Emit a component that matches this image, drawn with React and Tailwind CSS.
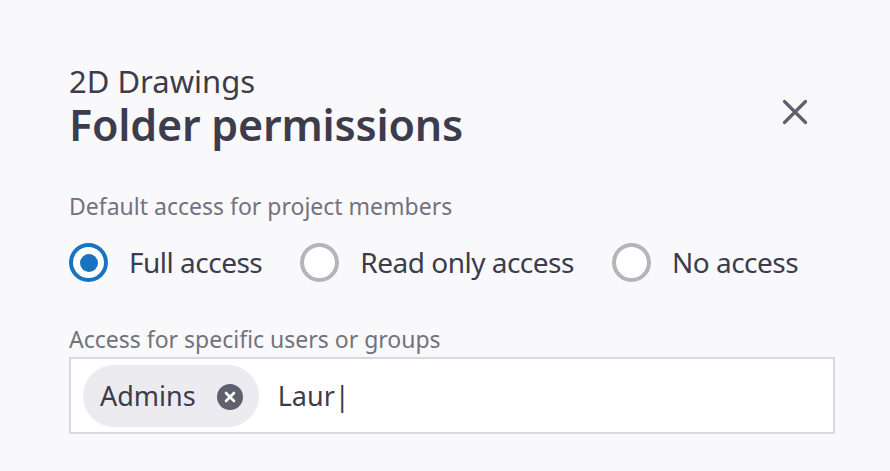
import React from "react";

function Radio({ checked, label }) {
  return (
    <label className="flex items-start gap-[21px]">
      {checked ? (
        <span className="w-[39px] h-[39px] rounded-full border-[4px] border-[#1a73c0] flex items-center justify-center bg-white">
          <span className="w-[18px] h-[18px] rounded-full bg-[#1a73c0]" />
        </span>
      ) : (
        <span className="w-[39px] h-[39px] rounded-full border-[4px] border-[#b4b4ba] bg-white" />
      )}
      <span className="text-[28px] leading-[38px] tracking-[-0.5px] text-[#3c3c4c]">{label}</span>
    </label>
  );
}

export default function App() {
  return (
    <div
      className="w-[890px] h-[471px] bg-[#f9f9fb] overflow-hidden"
      style={{ fontFamily: '"Noto Sans", "Open Sans", sans-serif' }}
    >
      <div className="pl-[69px] pr-[55px] pt-[63px]">
        <div className="flex items-start justify-between">
          <div>
            <div className="text-[31px] leading-[36px] text-[#3c3c4c]">2D Drawings</div>
            <div className="mt-[1px] text-[43px] leading-[50px] tracking-[-0.2px] font-semibold text-[#3c3c4c]">Folder permissions</div>
          </div>
          <button className="mt-[34px] mr-[25px] w-[30px] h-[30px] flex items-center justify-center text-[#5f5f6e]">
            <svg width="26" height="26" viewBox="0 0 26 26" fill="none" stroke="currentColor" strokeWidth="3.2" strokeLinecap="round">
              <path d="M2.5 2.5L23.5 23.5M23.5 2.5L2.5 23.5" />
            </svg>
          </button>
        </div>

        <div className="mt-[41px] text-[23px] leading-[30px] text-[#72727e]">Default access for project members</div>
        <div className="mt-[22px] flex items-start gap-[38px]">
          <Radio checked label="Full access" />
          <Radio label="Read only access" />
          <Radio label="No access" />
        </div>

        <div className="mt-[42px] text-[23px] leading-[30px] text-[#72727e]">Access for specific users or groups</div>
        <div className="mt-[3px] w-[766px] h-[77px] bg-white border-2 border-[#d9d9e0] flex items-center pl-[12px]">
          <div className="h-[62px] rounded-full bg-[#ebebf0] flex items-center pl-[17px] pr-[16px] gap-[21px]">
            <span className="text-[27px] leading-[38px] text-[#3c3c4c]">Admins</span>
            <svg width="26" height="26" viewBox="0 0 26 26" className="mt-[3px]">
              <circle cx="13" cy="13" r="13" fill="#5f5f6e" />
              <path d="M9 9L17 17M17 9L9 17" stroke="white" strokeWidth="2.6" strokeLinecap="round" />
            </svg>
          </div>
          <span className="ml-[19px] text-[27px] leading-[38px] text-[#3c3c4c]">Laur|</span>
        </div>
      </div>
    </div>
  );
}
